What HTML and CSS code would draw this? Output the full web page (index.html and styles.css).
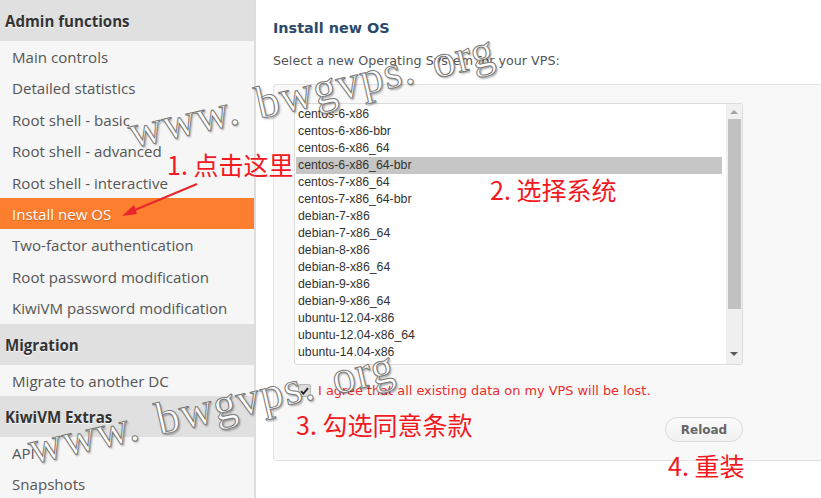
FILE: index.html
```html
<!DOCTYPE html>
<html lang="en">
<head>
  <meta charset="UTF-8" />
  <title>KiwiVM - Install new OS</title>
  <link rel="stylesheet" href="styles.css">
</head>
<body>
  <div class="page">
    <aside class="sidebar">
      <div class="group-title">Admin functions</div>
      <a class="nav-item">Main controls</a>
      <a class="nav-item">Detailed statistics</a>
      <a class="nav-item">Root shell - basic</a>
      <a class="nav-item">Root shell - advanced</a>
      <a class="nav-item">Root shell - interactive</a>
      <a class="nav-item active">Install new OS</a>
      <a class="nav-item">Two-factor authentication</a>
      <a class="nav-item">Root password modification</a>
      <a class="nav-item">KiwiVM password modification</a>
      <div class="group-title">Migration</div>
      <a class="nav-item">Migrate to another DC</a>
      <div class="group-title">KiwiVM Extras</div>
      <a class="nav-item">API</a>
      <a class="nav-item">Snapshots</a>
    </aside>

    <main class="content">
      <h2 class="page-title">Install new OS</h2>
      <p class="intro">Select a new Operating System for your VPS:</p>

      <div class="panel">
        <div class="os-list">
          <ul class="os-options">
            <li>centos-6-x86</li>
            <li>centos-6-x86-bbr</li>
            <li>centos-6-x86_64</li>
            <li class="selected">centos-6-x86_64-bbr</li>
            <li>centos-7-x86_64</li>
            <li>centos-7-x86_64-bbr</li>
            <li>debian-7-x86</li>
            <li>debian-7-x86_64</li>
            <li>debian-8-x86</li>
            <li>debian-8-x86_64</li>
            <li>debian-9-x86</li>
            <li>debian-9-x86_64</li>
            <li>ubuntu-12.04-x86</li>
            <li>ubuntu-12.04-x86_64</li>
            <li>ubuntu-14.04-x86</li>
            <li>ubuntu-14.04-x86_64</li>
            <li>ubuntu-16.04-x86_64</li>
          </ul>
          <div class="scrollbar">
            <span class="arrow up"></span>
            <span class="thumb"></span>
            <span class="arrow down"></span>
          </div>
        </div>

        <label class="agree">
          <span class="checkbox">
            <svg width="9" height="8" viewBox="0 0 9 8"><path d="M1 4.2 L3.4 6.6 L8 1.2" fill="none" stroke="#222" stroke-width="1.8"/></svg>
          </span>
          I agree that all existing data on my VPS will be lost.
        </label>

        <div class="actions">
          <button class="btn">Reload</button>
        </div>
      </div>
    </main>
  </div>

  <!-- annotations -->
  <div class="note note-1">1. 点击这里</div>
  <div class="note note-2">2. 选择系统</div>
  <div class="note note-3">3. 勾选同意条款</div>
  <div class="note note-4">4. 重装</div>
  <svg class="arrow-mark" width="90" height="45" viewBox="0 0 90 45">
    <line x1="83" y1="4" x2="16" y2="32" stroke="#e8262c" stroke-width="2"/>
    <path d="M8 36 L20 25 L23 34 Z" fill="#e8262c"/>
  </svg>

  <div class="watermark wm-1">www. bwgvps. org</div>
  <div class="watermark wm-2">www. bwgvps. org</div>
</body>
</html>
```

FILE: styles.css
```css
body {
  margin: 0;
  background: #fff;
  font-family: "DejaVu Sans", Verdana, sans-serif;
  overflow: hidden;
}
.page {
  display: flex;
  align-items: flex-start;
  height: 498px;
}

/* sidebar */
.sidebar {
  width: 254px;
  flex: none;
  height: 100%;
  background: #f6f6f6;
  border-right: 2px solid #dedede;
  font-family: "Open Sans", "Noto Sans", sans-serif;
  font-size: 15.1px;
}
.group-title {
  height: 41px;
  line-height: 42px;
  padding-left: 5px;
  background: #e0e0e0;
  color: #333;
  font-weight: bold;
  text-shadow: 0 1px 0 #fff;
}
.nav-item {
  display: block;
  height: 31.4px;
  line-height: 32px;
  padding-left: 12px;
  color: #555;
  white-space: nowrap;
}
.nav-item.active {
  background: #fd7e2e;
  color: #fff;
  text-shadow: 0 1px 1px rgba(120, 50, 0, 0.4);
}

/* main content */
.content {
  flex: 1;
  padding-left: 17px;
  overflow: hidden;
}
.page-title {
  margin: 19px 0 0;
  font-size: 14.4px;
  line-height: 18px;
  color: #2b4a6b;
}
.intro {
  margin: 16px 0 0;
  font-size: 12.7px;
  line-height: 16px;
  color: #555;
}
.panel {
  width: 580px;
  margin-top: 15px;
  padding: 18px 0 18px 20px;
  background: #f8f8f8;
  border: 1px solid #e2e2e2;
  border-radius: 3px;
}
.os-list {
  display: flex;
  width: 447px;
  height: 260px;
  background: #fff;
  border: 1px solid #dcdcdc;
  border-radius: 3px;
  overflow: hidden;
}
.os-options {
  flex: 1;
  margin: 0;
  padding: 2px 4px 0 1px;
  list-style: none;
  font-family: "Liberation Sans", Arial, sans-serif;
  font-size: 12.3px;
  color: #333;
}
.os-options li {
  height: 17px;
  line-height: 17px;
  padding-left: 2px;
  white-space: nowrap;
}
.os-options li.selected {
  background: #c6c6c6;
}
.scrollbar {
  width: 16px;
  flex: none;
  display: flex;
  flex-direction: column;
  align-items: center;
  background: #f0f0f0;
}
.scrollbar .thumb {
  width: 13px;
  height: 190px;
  background: #c1c1c1;
}
.arrow {
  width: 0;
  height: 0;
  border-left: 4px solid transparent;
  border-right: 4px solid transparent;
}
.arrow.up {
  margin: 6px 0 5px;
  border-bottom: 4px solid #a3a3a3;
}
.arrow.down {
  margin-top: 43px;
  border-top: 4px solid #5a5a5a;
}

.agree {
  display: flex;
  align-items: center;
  gap: 7px;
  margin: 18px 0 0 4px;
  font-size: 12.9px;
  color: #ee2a2a;
}
.checkbox {
  display: flex;
  align-items: center;
  justify-content: center;
  width: 11px;
  height: 11px;
  background: #dcdcdc;
  border: 1px solid #b5b5b5;
  border-radius: 2px;
}
.actions {
  width: 449px;
  display: flex;
  justify-content: flex-end;
  margin-top: 19px;
}
.btn {
  width: 78px;
  height: 25px;
  padding: 0;
  background: linear-gradient(#fbfbfb, #f1f1f1);
  border: 1px solid #dadada;
  border-radius: 13px;
  font-family: "DejaVu Sans", Verdana, sans-serif;
  font-size: 12px;
  font-weight: bold;
  color: #666;
}

/* red screenshot annotations */
.note {
  position: absolute;
  font-family: "Noto Sans CJK SC", sans-serif;
  font-size: 25px;
  line-height: 30px;
  color: #f2191f;
  white-space: nowrap;
}
.note-1 { left: 167px; top: 149px; }
.note-2 { left: 490px; top: 174px; }
.note-3 { left: 296px; top: 409px; }
.note-4 { left: 668px; top: 450px; }
.arrow-mark {
  position: absolute;
  left: 114px;
  top: 180px;
}

/* site watermark */
.watermark {
  position: absolute;
  font-family: "Liberation Serif", serif;
  font-size: 46px;
  line-height: 46px;
  letter-spacing: 1px;
  word-spacing: 6px;
  color: #fff;
  -webkit-text-stroke: 1px #7a7a7a;
  text-shadow: 1px 2px 2px rgba(0, 0, 0, 0.35);
  white-space: nowrap;
  transform-origin: 0 40px;
  transform: rotate(-13deg);
}
.wm-1 { left: 133px; top: 110px; }
.wm-2 { left: 33px; top: 426px; }
```
